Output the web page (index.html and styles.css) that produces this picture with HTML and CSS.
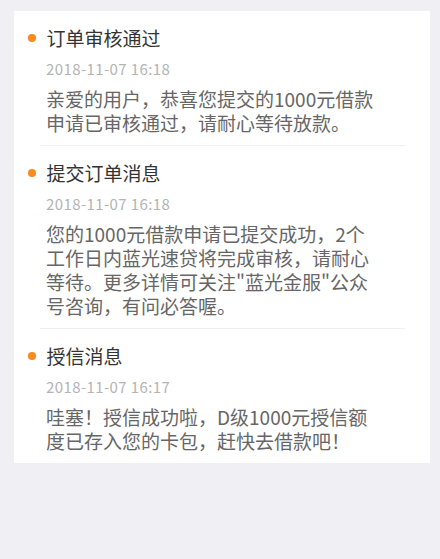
FILE: index.html
```html
<!DOCTYPE html>
<html lang="zh-CN">
<head>
<meta charset="utf-8">
<title>消息</title>
<link rel="stylesheet" href="styles.css">
</head>
<body>
<div class="page">
  <ul class="card">
    <li class="msg">
      <div class="msg-title"><span class="dot"></span><span>订单审核通过</span></div>
      <div class="msg-time">2018-11-07 16:18</div>
      <p class="msg-body">亲爱的用户，恭喜您提交的1000元借款<br>申请已审核通过，请耐心等待放款。</p>
    </li>
    <li class="msg">
      <div class="msg-title"><span class="dot"></span><span>提交订单消息</span></div>
      <div class="msg-time">2018-11-07 16:18</div>
      <p class="msg-body">您的1000元借款申请已提交成功，2个<br>工作日内蓝光速贷将完成审核，请耐心<br>等待。更多详情可关注"蓝光金服"公众<br>号咨询，有问必答喔。</p>
    </li>
    <li class="msg">
      <div class="msg-title"><span class="dot"></span><span>授信消息</span></div>
      <div class="msg-time">2018-11-07 16:17</div>
      <p class="msg-body">哇塞！授信成功啦，D级1000元授信额<br>度已存入您的卡包，赶快去借款吧！</p>
    </li>
  </ul>
</div>
</body>
</html>
```
FILE: styles.css
```css
html, body {
  margin: 0;
  padding: 0;
  background: #efeff4;
}
body {
  font-family: "Noto Sans CJK SC", "Noto Sans", sans-serif;
  width: 440px;
  height: 559px;
  overflow: hidden;
}
.page {
  padding: 11px 10px 0 14px;
}
.card {
  list-style: none;
  margin: 0;
  padding: 0 25px 0 26px;
  background: #ffffff;
}
.msg {
  padding: 14px 0 10px;
  border-bottom: 1px solid #efefef;
}
.msg:last-child {
  border-bottom: none;
}
.msg-title {
  display: flex;
  align-items: center;
  gap: 11px;
  margin-left: -12px;
  font-size: 19px;
  line-height: 26px;
  color: #333333;
}
.dot {
  width: 7.5px;
  height: 7.5px;
  border-radius: 50%;
  background: #fb8b1f;
  flex: none;
}
.msg-time {
  margin-top: 8px;
  padding-left: 6px;
  font-size: 15px;
  line-height: 20px;
  color: #b4b4b4;
  letter-spacing: 0.4px;
}
.msg-body {
  margin: 8px 0 0;
  padding-left: 6px;
  font-size: 19px;
  line-height: 24px;
  color: #666666;
  white-space: nowrap;
}
```
